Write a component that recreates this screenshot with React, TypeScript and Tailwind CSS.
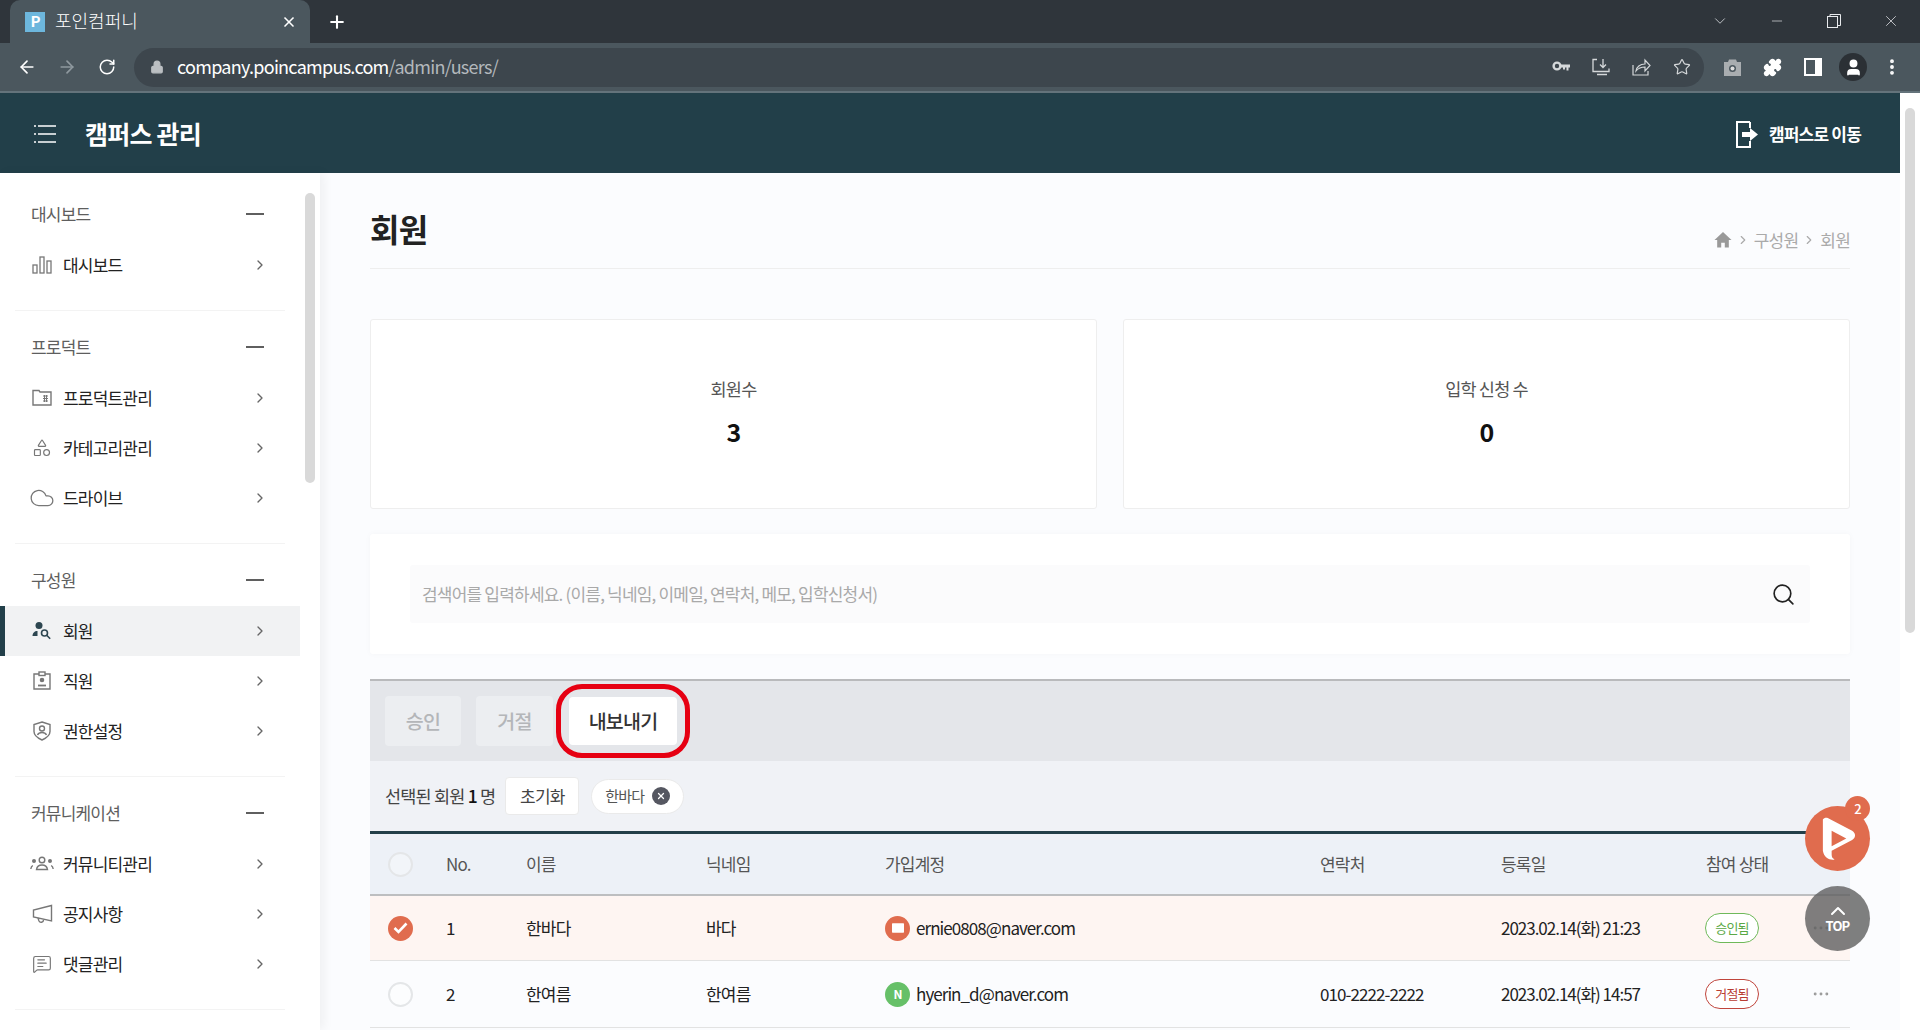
import React from "react"
import {
  ArrowLeft,
  ArrowRight,
  ChevronDown,
  ChevronRight,
  ChevronUp,
  Cloud,
  Ellipsis,
  EllipsisVertical,
  Lock,
  Mail,
  MessageSquareText,
  Minus,
  Plus,
  Puzzle,
  RotateCw,
  Search,
  Shapes,
  Star,
  User,
  X,
} from "lucide-react"

type SideItem = { label: string; icon: React.ReactNode; active?: boolean }
type SideSection = { title: string; items: SideItem[] }

const BarsIcon = () => (
  <svg width="20" height="20" viewBox="0 0 20 20" fill="none" stroke="#777" strokeWidth="1.3">
    <rect x="1" y="10" width="4" height="8" />
    <rect x="8" y="2" width="4" height="16" />
    <rect x="15" y="6" width="4" height="12" />
  </svg>
)

const FolderIcon = () => (
  <svg width="20" height="20" viewBox="0 0 20 20" fill="none" stroke="#777" strokeWidth="1.4">
    <path d="M1 2.500h6l1 1.500h11v13h-18z" />
    <path d="M11 8h5M11 10.500h5M11 13h5M12.500 7v7M14.500 7v7" strokeWidth="1" />
  </svg>
)

const MemberIcon = () => (
  <svg width="20" height="20" viewBox="0 0 20 20" fill="#2d4650">
    <circle cx="7" cy="4.500" r="3.500" />
    <path d="M0.500 15c0-3 2-5 5-5v5z" />
    <circle cx="12.500" cy="12" r="3" fill="none" stroke="#2d4650" strokeWidth="1.600" />
    <path d="M14.700 14.200l3.500 3.500" stroke="#2d4650" strokeWidth="1.600" />
  </svg>
)

const BadgeIcon = () => (
  <svg width="20" height="20" viewBox="0 0 20 20" fill="none" stroke="#777" strokeWidth="1.400">
    <path d="M7 3h-5v15h16v-15h-5" />
    <rect x="7" y="1" width="6" height="3.500" />
    <circle cx="10" cy="9" r="1.600" fill="#777" />
    <path d="M6 14.500h8" strokeWidth="1.800" />
  </svg>
)

const ShieldIcon = () => (
  <svg width="20" height="20" viewBox="0 0 20 20" fill="none" stroke="#777" strokeWidth="1.400">
    <path d="M10 1l8 2.500v7c0 4-3.500 6.500-8 8.500-4.500-2-8-4.500-8-8.500v-7z" />
    <circle cx="10" cy="7.500" r="2.500" />
    <path d="M5.500 14c1-2 2.500-2.500 4.500-2.500s3.500 0.500 4.500 2.500" />
  </svg>
)

const CommunityIcon = () => (
  <svg width="24" height="18" viewBox="0 0 24 18" fill="none" stroke="#777" strokeWidth="1.400" className="shrink-0">
    <circle cx="12" cy="5" r="2.800" />
    <path d="M6.500 14.500c0.500-3 2.500-4.500 5.500-4.500s5 1.500 5.500 4.500z" />
    <circle cx="4" cy="6" r="1.300" fill="#777" />
    <circle cx="20" cy="6" r="1.300" fill="#777" />
    <path d="M0.800 14c0.200-1.500 0.800-2.800 2-3.500M23.200 14c-0.200-1.500-0.800-2.800-2-3.500" />
  </svg>
)

const HornIcon = () => (
  <svg width="21" height="20" viewBox="0 0 21 20" fill="none" stroke="#777" strokeWidth="1.400" className="shrink-0">
    <path d="M19.500 1.500v15.500l-18-4v-7z" />
    <path d="M6 14l1 3c1 2 4.500 1.500 4.500-1" />
  </svg>
)

const grayIcon = { size: 22, color: "#777", strokeWidth: 1.4 }

const sections: SideSection[] = [
  { title: "대시보드", items: [{ label: "대시보드", icon: <BarsIcon /> }] },
  {
    title: "프로덕트",
    items: [
      { label: "프로덕트관리", icon: <FolderIcon /> },
      { label: "카테고리관리", icon: <Shapes {...grayIcon} /> },
      { label: "드라이브", icon: <Cloud {...grayIcon} size={26} strokeWidth={1.2} className="shrink-0" /> },
    ],
  },
  {
    title: "구성원",
    items: [
      { label: "회원", icon: <MemberIcon />, active: true },
      { label: "직원", icon: <BadgeIcon /> },
      { label: "권한설정", icon: <ShieldIcon /> },
    ],
  },
  {
    title: "커뮤니케이션",
    items: [
      { label: "커뮤니티관리", icon: <CommunityIcon /> },
      { label: "공지사항", icon: <HornIcon /> },
      { label: "댓글관리", icon: <MessageSquareText {...grayIcon} /> },
    ],
  },
]

const BrowserChrome = () => (
  <div className="shrink-0 bg-[#2f353b]">
    <div className="flex h-[43px] items-end pl-[10px] text-white">
      <div className="flex h-[43px] w-[300px] items-center rounded-t-[10px] bg-[#4b575e] pl-[15px] pr-[13px]">
        <div className="flex h-[20px] w-[20px] items-center justify-center bg-[#6db7dd] text-[15px] font-bold">P</div>
        <span className="ml-[10px] flex-1 pb-[2px] text-[18px] font-light tracking-normal">포인컴퍼니</span>
        <X size={16} strokeWidth={2.5} />
      </div>
      <Plus size={20} strokeWidth={2.5} className="mb-[11px] ml-[17px]" />
      <div className="mb-[13px] ml-auto flex items-center pr-[20px] text-[#e8eaed]">
        <ChevronDown size={18} strokeWidth={1} className="mr-[40px]" />
        <Minus size={16} strokeWidth={1} className="mr-[42px]" />
        <svg width="14" height="14" viewBox="0 0 14 14" fill="none" stroke="#e8eaed" className="mr-[41px]">
          <rect x="0.500" y="2.500" width="10" height="11" />
          <path d="M3 2.500v-2h10.500v11h-3" />
        </svg>
        <X size={18} strokeWidth={1} />
      </div>
    </div>
    <div className="flex h-[50px] items-center border-b-2 border-[#64737b] bg-[#4b575e] text-white">
      <ArrowLeft size={20} className="ml-[17px]" />
      <ArrowRight size={20} className="ml-[20px] text-[#8f999f]" />
      <RotateCw size={18} className="ml-[21px]" />
      <div className="ml-[18px] flex h-[39px] w-[1570px] items-center rounded-full bg-[#3d464d] pl-[16px] pr-[13px]">
        <Lock size={14} className="text-[#bbbfc2]" fill="#bbbfc2" />
        <span className="ml-[13px] pb-[2px] text-[18px] tracking-[-0.04em]">
          company.poincampus.com<span className="text-[#b3b8bc]">/admin/users/</span>
        </span>
        <div className="ml-auto flex items-center gap-[22px] text-[#d5d8da]">
          <svg width="18" height="12" viewBox="0 0 18 12" fill="#d5d8da">
            <circle cx="5" cy="5" r="3.400" fill="none" stroke="#d5d8da" strokeWidth="2.400" />
            <path d="M8 3.500h10v3h-1.500v3h-2v-3h-1.500v2h-2v-2h-3z" />
          </svg>
          <svg width="18" height="18" viewBox="0 0 18 18" fill="none" stroke="#d5d8da" strokeWidth="1.300">
            <path d="M5 1.500h-4v12h16v-3M11 1v8M8 6.500l3 3 3-3M5 16.500h10" />
          </svg>
          <svg width="19" height="18" viewBox="0 0 19 18" fill="none" stroke="#d5d8da" strokeWidth="1.200">
            <path d="M1 7v10h15v-4" />
            <path d="M4 13c0.500-4 4-7 9-7v-4l5 5.500-5 5.500v-4c-4 0-7 1.500-9 4z" />
          </svg>
          <Star size={18} strokeWidth={1.6} />
        </div>
      </div>
      <div className="ml-[19px] flex items-center text-white">
        <svg width="19" height="17" viewBox="0 0 19 17" fill="#a9adb0">
          <path d="M1 3h4l1-2.500h7l1 2.500h4v14h-17z" />
          <circle cx="9.500" cy="9.500" r="3.500" fill="#4b575e" />
          <circle cx="9.500" cy="9.500" r="2" fill="#ddd" />
        </svg>
        <Puzzle size={19} fill="white" className="ml-[21px]" />
        <svg width="18" height="18" viewBox="0 0 18 18" className="ml-[22px]">
          <path d="M0 0h18v18h-18z M2 2v14h9v-14z" fill="white" fillRule="evenodd" />
        </svg>
        <div className="ml-[17px] flex h-[28px] w-[28px] items-center justify-center rounded-full bg-[#2b3035]">
          <User size={19} fill="white" />
        </div>
        <EllipsisVertical size={20} strokeWidth={2.6} className="ml-[15px]" />
      </div>
    </div>
  </div>
)

const Sidebar = () => (
  <aside className="relative z-10 flex w-[320px] shrink-0 bg-white shadow-[4px_0_10px_rgba(0,0,0,0.05)]">
    <div className="w-[300px] pt-[20px]">
      {sections.map((section) => (
        <div key={section.title} className="mx-[15px] border-b border-[#f3f3f3] pb-[20px] pt-[15px] first:pt-0">
          <div className="-mx-[15px] flex h-[42px] items-center justify-between pl-[31px] pr-[36px]">
            <span className="text-[17px] text-[#5e5e5e]">{section.title}</span>
            <div className="h-[2px] w-[18px] bg-[#5f5f5f]" />
          </div>
          <div className="-mx-[15px] mt-[5px]">
            {section.items.map((item) => (
              <div
                key={item.label}
                className={
                  item.active
                    ? "flex h-[50px] items-center border-l-[5px] border-[#223f49] bg-[#f1f2f3] pl-[27px] pr-[32px]"
                    : "flex h-[50px] items-center pl-[32px] pr-[32px]"
                }
              >
                <div className="flex w-[20px] items-center justify-center">{item.icon}</div>
                <span className="ml-[11px] flex-1 text-[17px] text-[#222]">{item.label}</span>
                <ChevronRight size={16} color="#666" />
              </div>
            ))}
          </div>
        </div>
      ))}
    </div>
    <div className="ml-[5px] mt-[20px] h-[290px] w-[10px] rounded-full bg-[#d9d9d9]" />
  </aside>
)

const StatCard = ({ label, value }: { label: string; value: string }) => (
  <div className="flex h-[190px] flex-1 flex-col items-center justify-center rounded-[3px] border border-[#eeeeee] bg-white pb-[5px]">
    <span className="text-[17.500px] leading-[26px] text-[#555]">{label}</span>
    <span className="mt-[12px] text-[25px] font-bold leading-[34px] text-[#111]">{value}</span>
  </div>
)

const gridCols = "grid grid-cols-[76px_80px_180px_179px_435px_181px_205px_105px_39px] items-center"

const Radio = ({ checked }: { checked?: boolean }) =>
  checked ? (
    <div className="ml-[18px] flex h-[25px] w-[25px] items-center justify-center rounded-full bg-[#e06c4e]">
      <svg width="15" height="12" viewBox="0 0 15 12" fill="none" stroke="white" strokeWidth="2.600">
        <path d="M1.500 6l4 4 8-8.500" />
      </svg>
    </div>
  ) : (
    <div className="ml-[18px] h-[25px] w-[25px] rounded-full border-2 border-[#e4e6e8] bg-white/30" />
  )

const Row = ({
  no,
  name,
  nick,
  email,
  phone,
  date,
  status,
  selected,
}: {
  no: string
  name: string
  nick: string
  email: string
  phone: string
  date: string
  status: "승인됨" | "거절됨"
  selected?: boolean
}) => (
  <div
    className={
      selected
        ? `${gridCols} h-[65px] border-b border-[#e2e2e2] bg-[#fef5f2] text-[17px] text-[#222]`
        : `${gridCols} h-[67px] border-b border-[#e2e2e2] text-[17px] text-[#222]`
    }
  >
    <Radio checked={selected} />
    <span>{no}</span>
    <span>{name}</span>
    <span>{nick}</span>
    <div className="flex items-center">
      {selected ? (
        <div className="flex h-[25px] w-[25px] items-center justify-center rounded-full bg-[#e06c4e]">
          <Mail size={16} color="#e06c4e" fill="white" />
        </div>
      ) : (
        <div className="flex h-[25px] w-[25px] items-center justify-center rounded-full bg-[#66c068] text-[12px] font-bold text-white">N</div>
      )}
      <span className="ml-[6px] tracking-[-0.055em]">{email}</span>
    </div>
    <span className="tracking-[-0.055em]">{phone}</span>
    <span className="tracking-[-0.06em]">{date}</span>
    <div
      className={
        status === "승인됨"
          ? "-ml-px flex h-[30px] w-[54px] items-center justify-center rounded-full border border-[#6fb95a] bg-white text-[13px] text-[#5aa845]"
          : "-ml-px flex h-[30px] w-[54px] items-center justify-center rounded-full border border-[#c0453c] bg-white text-[13px] text-[#b93d33]"
      }
    >
      {status}
    </div>
    <Ellipsis size={20} color="#999" strokeWidth={1.5} />
  </div>
)

const Main = () => (
  <main className="relative min-w-0 flex-1 overflow-hidden bg-[#fbfcfe] px-[50px]">
    <div className="flex h-[96px] items-start justify-between border-b border-[#eeeeee] pt-[33px]">
      <h1 className="text-[32px] font-bold leading-[44px] text-[#222]">회원</h1>
      <div className="mt-[21px] flex items-center text-[17px] text-[#aaa]">
        <svg width="18" height="17" viewBox="0 0 20 19" fill="#999">
          <path d="M10 1l-9.500 9h3v8.500h4.500v-5.500h4v5.500h4.500v-8.500h3z" />
        </svg>
        <ChevronRight size={14} className="mx-[4px]" />
        구성원
        <ChevronRight size={14} className="mx-[4px]" />
        회원
      </div>
    </div>

    <div className="mt-[50px] flex gap-[26px]">
      <StatCard label="회원수" value="3" />
      <StatCard label="입학 신청 수" value="0" />
    </div>

    <div className="mt-[25px] flex h-[120px] items-center justify-center rounded-[3px] bg-white px-[40px] shadow-[0_0_6px_rgba(0,0,0,0.03)]">
      <div className="flex h-[58px] w-full items-center justify-between rounded-[3px] bg-[#fbfbfc] pl-[12px] pr-[14px]">
        <span className="text-[17px] text-[#a9a9a9]">검색어를 입력하세요. (이름, 닉네임, 이메일, 연락처, 메모, 입학신청서)</span>
        <Search size={25} color="#222" strokeWidth={1.6} />
      </div>
    </div>

    <div className="mt-[25px] flex h-[82px] items-center border-t-2 border-[#b9babc] bg-[#e4e6ea] pl-[15px]">
      <div className="flex h-[50px] w-[76px] items-center justify-center rounded-[4px] bg-[#eceef1] text-[19.500px] font-medium text-[#b4b6b9]">승인</div>
      <div className="ml-[15px] flex h-[50px] w-[77px] items-center justify-center rounded-[4px] bg-[#eceef1] text-[19.500px] font-medium text-[#b4b6b9]">거절</div>
      <div className="relative ml-[16px] flex h-[48px] w-[108px] items-center justify-center rounded-[4px] bg-white text-[19.500px] font-medium text-[#333]">
        내보내기
        <div className="absolute -inset-x-[13px] -inset-y-[13px] rounded-[26px] border-[5px] border-[#e60012]" />
      </div>
    </div>

    <div className="flex h-[70px] items-center bg-[#f0f2f6] pl-[15px]">
      <span className="text-[17.500px] text-[#444]">
        선택된 회원 <span className="font-medium text-[#111]">1</span> 명
      </span>
      <div className="ml-[10px] flex h-[38px] w-[74px] items-center justify-center rounded-[4px] border border-[#eaeaea] bg-white text-[17px] text-[#444]">초기화</div>
      <div className="ml-[12px] flex h-[35px] w-[93px] items-center justify-center rounded-full border border-[#eaeaea] bg-white text-[15px] text-[#555]">
        한바다
        <div className="ml-[8px] flex h-[18px] w-[18px] items-center justify-center rounded-full bg-[#555761]">
          <X size={10} color="white" strokeWidth={3} />
        </div>
      </div>
    </div>

    <div className="border-t-[3px] border-[#223f49]">
      <div className={`${gridCols} h-[62px] border-b-2 border-[#bdbec0] bg-[#edf1f7] text-[17px] text-[#555]`}>
        <Radio />
        <span>No.</span>
        <span>이름</span>
        <span>닉네임</span>
        <span>가입계정</span>
        <span>연락처</span>
        <span>등록일</span>
        <span className="whitespace-nowrap">참여 상태</span>
        <span />
      </div>
      <Row no="1" name="한바다" nick="바다" email="ernie0808@naver.com" phone="" date="2023.02.14(화) 21:23" status="승인됨" selected />
      <Row no="2" name="한여름" nick="한여름" email="hyerin_d@naver.com" phone="010-2222-2222" date="2023.02.14(화) 14:57" status="거절됨" />
    </div>

    <div className="absolute right-[30px] top-[633px] flex h-[65px] w-[65px] items-center justify-center rounded-full bg-[#e06c4e]">
      <svg width="39" height="44" viewBox="0 0 40 44" fill="white">
        <path d="M5 2c1-1.500 3-2 5-1.500l25 13c4 2.500 4 7 0 9.500l-21 11v4c0 3 1 4 3 5-5 1-11-2-12-9z" />
        <path d="M14 13.500l15 8-15 8z" fill="#e06c4e" />
      </svg>
      <div className="absolute right-0 -top-[10px] flex h-[25px] w-[25px] items-center justify-center rounded-full bg-[#e06c4e] text-[13px] font-medium text-white">2</div>
    </div>
    <div className="absolute right-[30px] top-[713px] flex h-[65px] w-[65px] flex-col items-center justify-center rounded-full bg-[#5f5f5f]/80 text-white">
      <ChevronUp size={24} strokeWidth={2} className="-mb-[6px] -mt-[4px]" />
      <span className="text-[13px] font-bold leading-[18px]">TOP</span>
    </div>
  </main>
)

export default function App() {
  return (
    <div
      className="flex h-[1030px] w-[1920px] flex-col overflow-hidden tracking-[-0.05em]"
      style={{ fontFamily: '"Noto Sans CJK KR", "Noto Sans", sans-serif' }}
    >
      <BrowserChrome />
      <div className="flex min-h-0 flex-1">
        <div className="flex min-w-0 flex-1 flex-col">
          <header className="flex h-[80px] shrink-0 items-center justify-between bg-[#223f49] pl-[34px] pr-[39px] pt-[2px] text-white">
            <div className="flex items-center">
              <svg width="22" height="18" viewBox="0 0 22 18" stroke="white" strokeWidth="1.600">
                <path d="M4 1h18M4 9h18M4 17h18M0 1h2M0 9h2M0 17h2" />
              </svg>
              <span className="ml-[29px] text-[25px] font-bold">캠퍼스 관리</span>
            </div>
            <div className="flex items-center">
              <svg width="24" height="27" viewBox="0 0 24 27" fill="none" stroke="white" strokeWidth="2">
                <path d="M15 1h-13v25h13v-6M15 7v-6" />
                <path d="M7 11h8v-4l8 6.500-8 6.500v-4h-8z" fill="white" stroke="none" />
              </svg>
              <span className="ml-[10px] text-[17px] font-bold">캠퍼스로 이동</span>
            </div>
          </header>
          <div className="flex min-h-0 flex-1">
            <Sidebar />
            <Main />
          </div>
        </div>
        <div className="w-[20px] shrink-0 bg-white pl-[5px] pt-[15px]">
          <div className="h-[525px] w-[10px] rounded-full bg-[#d9d9d9]" />
        </div>
      </div>
    </div>
  )
}
